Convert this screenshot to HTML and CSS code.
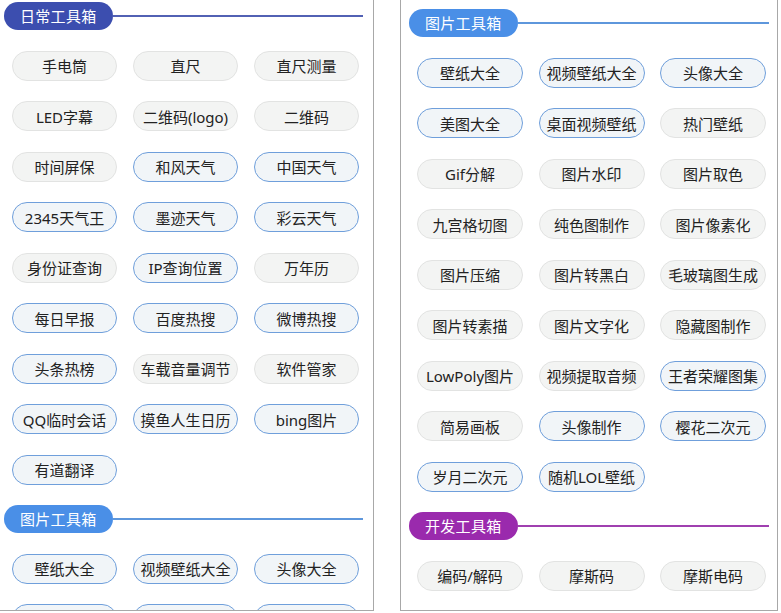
FILE: index.html
```html
<!DOCTYPE html>
<html lang="zh">
<head>
<meta charset="utf-8">
<link rel="stylesheet" href="styles.css">
</head>
<body>
<div class="page">
  <div class="panel panel-left">
    <div class="section first">
      <div class="sec-head indigo"><span class="pill">日常工具箱</span><span class="line"></span></div>
      <div class="grid">
        <div class="btn">手电筒</div>
        <div class="btn">直尺</div>
        <div class="btn">直尺测量</div>
        <div class="btn">LED字幕</div>
        <div class="btn">二维码(logo)</div>
        <div class="btn">二维码</div>
        <div class="btn">时间屏保</div>
        <div class="btn blue">和风天气</div>
        <div class="btn blue">中国天气</div>
        <div class="btn blue">2345天气王</div>
        <div class="btn blue">墨迹天气</div>
        <div class="btn blue">彩云天气</div>
        <div class="btn">身份证查询</div>
        <div class="btn blue">IP查询位置</div>
        <div class="btn">万年历</div>
        <div class="btn blue">每日早报</div>
        <div class="btn blue">百度热搜</div>
        <div class="btn blue">微博热搜</div>
        <div class="btn blue">头条热榜</div>
        <div class="btn">车载音量调节</div>
        <div class="btn">软件管家</div>
        <div class="btn blue">QQ临时会话</div>
        <div class="btn blue">摸鱼人生日历</div>
        <div class="btn blue">bing图片</div>
        <div class="btn blue">有道翻译</div>
      </div>
    </div>
    <div class="section">
      <div class="sec-head sky"><span class="pill">图片工具箱</span><span class="line"></span></div>
      <div class="grid">
        <div class="btn blue">壁纸大全</div>
        <div class="btn blue">视频壁纸大全</div>
        <div class="btn blue">头像大全</div>
        <div class="btn blue">美图大全</div>
        <div class="btn blue">桌面视频壁纸</div>
        <div class="btn blue">热门壁纸</div>
      </div>
    </div>
  </div>
  <div class="panel panel-right">
    <div class="section first">
      <div class="sec-head sky"><span class="pill">图片工具箱</span><span class="line"></span></div>
      <div class="grid">
        <div class="btn blue">壁纸大全</div>
        <div class="btn blue">视频壁纸大全</div>
        <div class="btn blue">头像大全</div>
        <div class="btn blue">美图大全</div>
        <div class="btn blue">桌面视频壁纸</div>
        <div class="btn">热门壁纸</div>
        <div class="btn">Gif分解</div>
        <div class="btn">图片水印</div>
        <div class="btn">图片取色</div>
        <div class="btn">九宫格切图</div>
        <div class="btn">纯色图制作</div>
        <div class="btn">图片像素化</div>
        <div class="btn">图片压缩</div>
        <div class="btn">图片转黑白</div>
        <div class="btn">毛玻璃图生成</div>
        <div class="btn">图片转素描</div>
        <div class="btn">图片文字化</div>
        <div class="btn">隐藏图制作</div>
        <div class="btn">LowPoly图片</div>
        <div class="btn">视频提取音频</div>
        <div class="btn blue">王者荣耀图集</div>
        <div class="btn">简易画板</div>
        <div class="btn blue">头像制作</div>
        <div class="btn blue">樱花二次元</div>
        <div class="btn blue">岁月二次元</div>
        <div class="btn blue">随机LOL壁纸</div>
      </div>
    </div>
    <div class="section">
      <div class="sec-head purple"><span class="pill">开发工具箱</span><span class="line"></span></div>
      <div class="grid">
        <div class="btn">编码/解码</div>
        <div class="btn">摩斯码</div>
        <div class="btn">摩斯电码</div>
      </div>
    </div>
  </div>
</div>
</body>
</html>
```

FILE: styles.css
```css
* { box-sizing: border-box; }
html, body {
  margin: 0;
  padding: 0;
  background: #ffffff;
}
body {
  font-family: "Noto Sans", "Noto Sans CJK SC", sans-serif;
  color: #222222;
}
.page {
  display: flex;
  align-items: flex-start;
}
.panel {
  height: 611px;
  overflow: hidden;
  border-bottom: 1px solid #a8a8a8;
  background: #ffffff;
}
.panel-left {
  width: 374px;
  border-right: 1px solid #a8a8a8;
  padding-top: 2px;
}
.panel-right {
  width: 378px;
  margin-left: 26px;
  border-left: 1px solid #a8a8a8;
  border-right: 1px solid #a8a8a8;
  padding-top: 9px;
}
.section {
  margin-top: 20.5px;
}
.section.first {
  margin-top: 0;
}
.sec-head {
  display: flex;
  align-items: center;
  height: 28px;
}
.panel-left .sec-head {
  margin-left: 4px;
  margin-right: 10px;
}
.panel-right .sec-head {
  margin-left: 8px;
  margin-right: 8px;
}
.pill {
  height: 28px;
  line-height: 28px;
  padding: 0 16px;
  border-radius: 14px;
  color: #ffffff;
  font-size: 15px;
  letter-spacing: 0.3px;
  white-space: nowrap;
}
.line {
  flex: 1;
  height: 2px;
}
.indigo .pill { background: #3c4eaf; }
.indigo .line { background: #5261b4; }
.sky .pill { background: #4a8fe7; }
.sky .line { background: #5e97dc; }
.purple .pill { background: #9a2aad; }
.purple .line { background: #a040b0; }
.grid {
  display: grid;
  grid-template-columns: repeat(3, 105px);
  column-gap: 16px;
  row-gap: 20.5px;
  margin-top: 20.5px;
}
.panel-left .grid {
  padding-left: 12px;
}
.panel-right .grid {
  padding-left: 16px;
  grid-template-columns: repeat(3, 106px);
  column-gap: 15.5px;
}
.btn {
  height: 30px;
  border-radius: 15px;
  border: 1px solid #e2e3e2;
  background: #f3f4f3;
  display: flex;
  align-items: center;
  justify-content: center;
  font-size: 15px;
  color: #222222;
  white-space: nowrap;
}
.btn.blue {
  border-color: #6f9fdb;
  background: #f1f5f8;
}
```
